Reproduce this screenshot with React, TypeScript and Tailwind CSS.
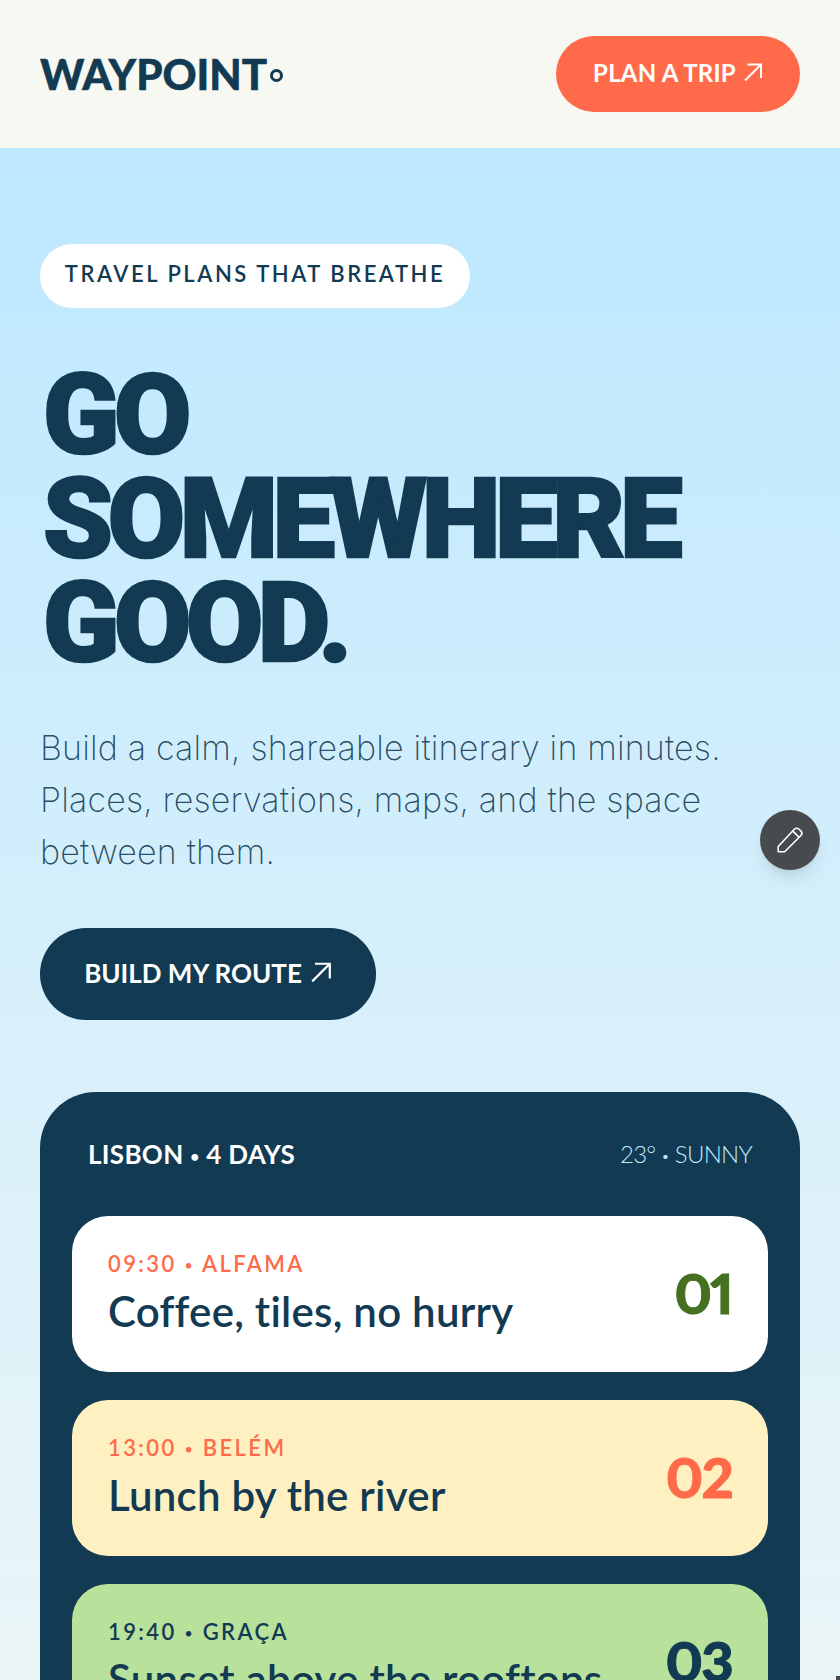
const items = [
  { time: "09:30", place: "ALFAMA", title: "Coffee, tiles, no hurry", num: "01", bg: "bg-white", label: "text-[#ff6b4a]", numColor: "text-[#44701f]" },
  { time: "13:00", place: "BELÉM", title: "Lunch by the river", num: "02", bg: "bg-[#fef0c0]", label: "text-[#ff6b4a]", numColor: "text-[#ff6b4a]" },
  { time: "19:40", place: "GRAÇA", title: "Sunset above the rooftops", num: "03", bg: "bg-[#b8e29b]", label: "text-[#123a52]", numColor: "text-[#123a52]" },
];

function Arrow({ className }: { className: string }) {
  return (
    <svg viewBox="0 0 20 20" fill="none" stroke="currentColor" strokeWidth="2" className={className}>
      <path d="M2 18.5 L18 2.5 M4.5 2.5 H18 V16" />
    </svg>
  );
}

function Dot() {
  return <span className="text-[0.6em] align-[0.15em]">•</span>;
}

export default function App() {
  return (
    <div className="relative h-[1680px] overflow-hidden bg-[#f8f8f3] font-['Lato',sans-serif] text-[#123a52] [font-variant-ligatures:none]">
      {/* Header */}
      <header className="h-[148px] flex items-center justify-between px-10">
        <div className="flex items-end text-[42px] font-black leading-none [-webkit-text-stroke:0.5px_#123a52]">
          WAYPOINT
          <span className="ml-[3px] mb-[13px] w-[13px] h-[13px] rounded-full border-[3px] border-[#123a52]"></span>
        </div>
        <button className="h-[76px] w-[244px] pb-[2px] rounded-full bg-[#ff6b4a] text-white text-[24px] font-bold tracking-[0.01em] flex items-center justify-center gap-[7px]">
          PLAN A TRIP <Arrow className="w-[20px] h-[20px] mb-[3px]" />
        </button>
      </header>

      {/* Hero */}
      <main className="h-[1532px] px-10 pt-[96px] bg-gradient-to-b from-[#bde8ff] to-[#eaf5f7]">
        <div className="w-[430px] h-[64px] pb-[5px] rounded-full bg-white flex items-center justify-center text-[22px] font-semibold tracking-[0.115em]">
          TRAVEL PLANS THAT BREATHE
        </div>

        <h1 className="mt-[55px] pl-[3px] text-[112px] leading-[104px] font-['Roboto',sans-serif] font-black tracking-[-0.048em] [-webkit-text-stroke:2.5px_#123a52]">
          GO
          <br />
          SOMEWHERE
          <br />
          GOOD.
        </h1>

        <p className="mt-[47px] text-[34px] leading-[52px] font-['Inter',sans-serif] font-extralight tracking-[0.005em] text-[#123a52]/90">
          Build a calm, shareable itinerary in minutes.
          <br />
          Places, reservations, maps, and the space
          <br />
          between them.
        </p>

        <button className="mt-[50px] h-[92px] w-[336px] pb-[2px] rounded-full bg-[#123a52] text-white text-[26px] font-bold flex items-center justify-center gap-[8px]">
          BUILD MY ROUTE <Arrow className="w-[22px] h-[22px] mb-[3px]" />
        </button>

        {/* Itinerary card */}
        <section className="mt-[72px] rounded-[56px] bg-[#123a52] px-8 pt-8 pb-8">
          <div className="h-[60px] flex items-center justify-between px-4 mb-[32px]">
            <span className="text-white text-[26px] font-bold tracking-[0.012em]">
              LISBON <Dot /> 4 DAYS
            </span>
            <span className="text-[#bde8ff] text-[24px] font-light tracking-[-0.03em]">
              23° <Dot /> SUNNY
            </span>
          </div>
          <div className="flex flex-col gap-7">
            {items.map((item) => (
              <div key={item.num} className={`h-[156px] rounded-[36px] px-9 flex items-center justify-between ${item.bg}`}>
                <div className="pb-[2px]">
                  <div className={`-mt-[2px] text-[22px] font-semibold tracking-[0.11em] ${item.label}`}>
                    {item.time} <Dot /> {item.place}
                  </div>
                  <div className="mt-[5px] text-[42px] leading-[52px] font-semibold tracking-[0.006em]">{item.title}</div>
                </div>
                <div className={`pb-[2px] text-[56px] font-black leading-none tracking-[-0.03em] proportional-nums [-webkit-text-stroke:1px_currentColor] ${item.numColor}`}>
                  {item.num}
                </div>
              </div>
            ))}
          </div>
        </section>
      </main>

      {/* Floating edit button */}
      <button className="absolute left-[760px] top-[810px] w-[60px] h-[60px] rounded-full bg-[#474b4e] text-white flex items-center justify-center shadow-lg">
        <svg viewBox="0 0 28 28" fill="none" stroke="currentColor" strokeWidth="1.5" strokeLinejoin="round" className="w-[30px] h-[30px]">
          <path d="M3 20 L18 4 Q20 2 22.5 4 L24.5 6 Q26 8 24 10 L9 25 L3 25 Z M16.5 5.5 L22.5 11.5" />
        </svg>
      </button>

      {/* Speck of the next floating control, at the very corner */}
      <div className="absolute right-0 bottom-0 w-[4px] h-[4px] bg-[#474b4e]"></div>
    </div>
  );
}
